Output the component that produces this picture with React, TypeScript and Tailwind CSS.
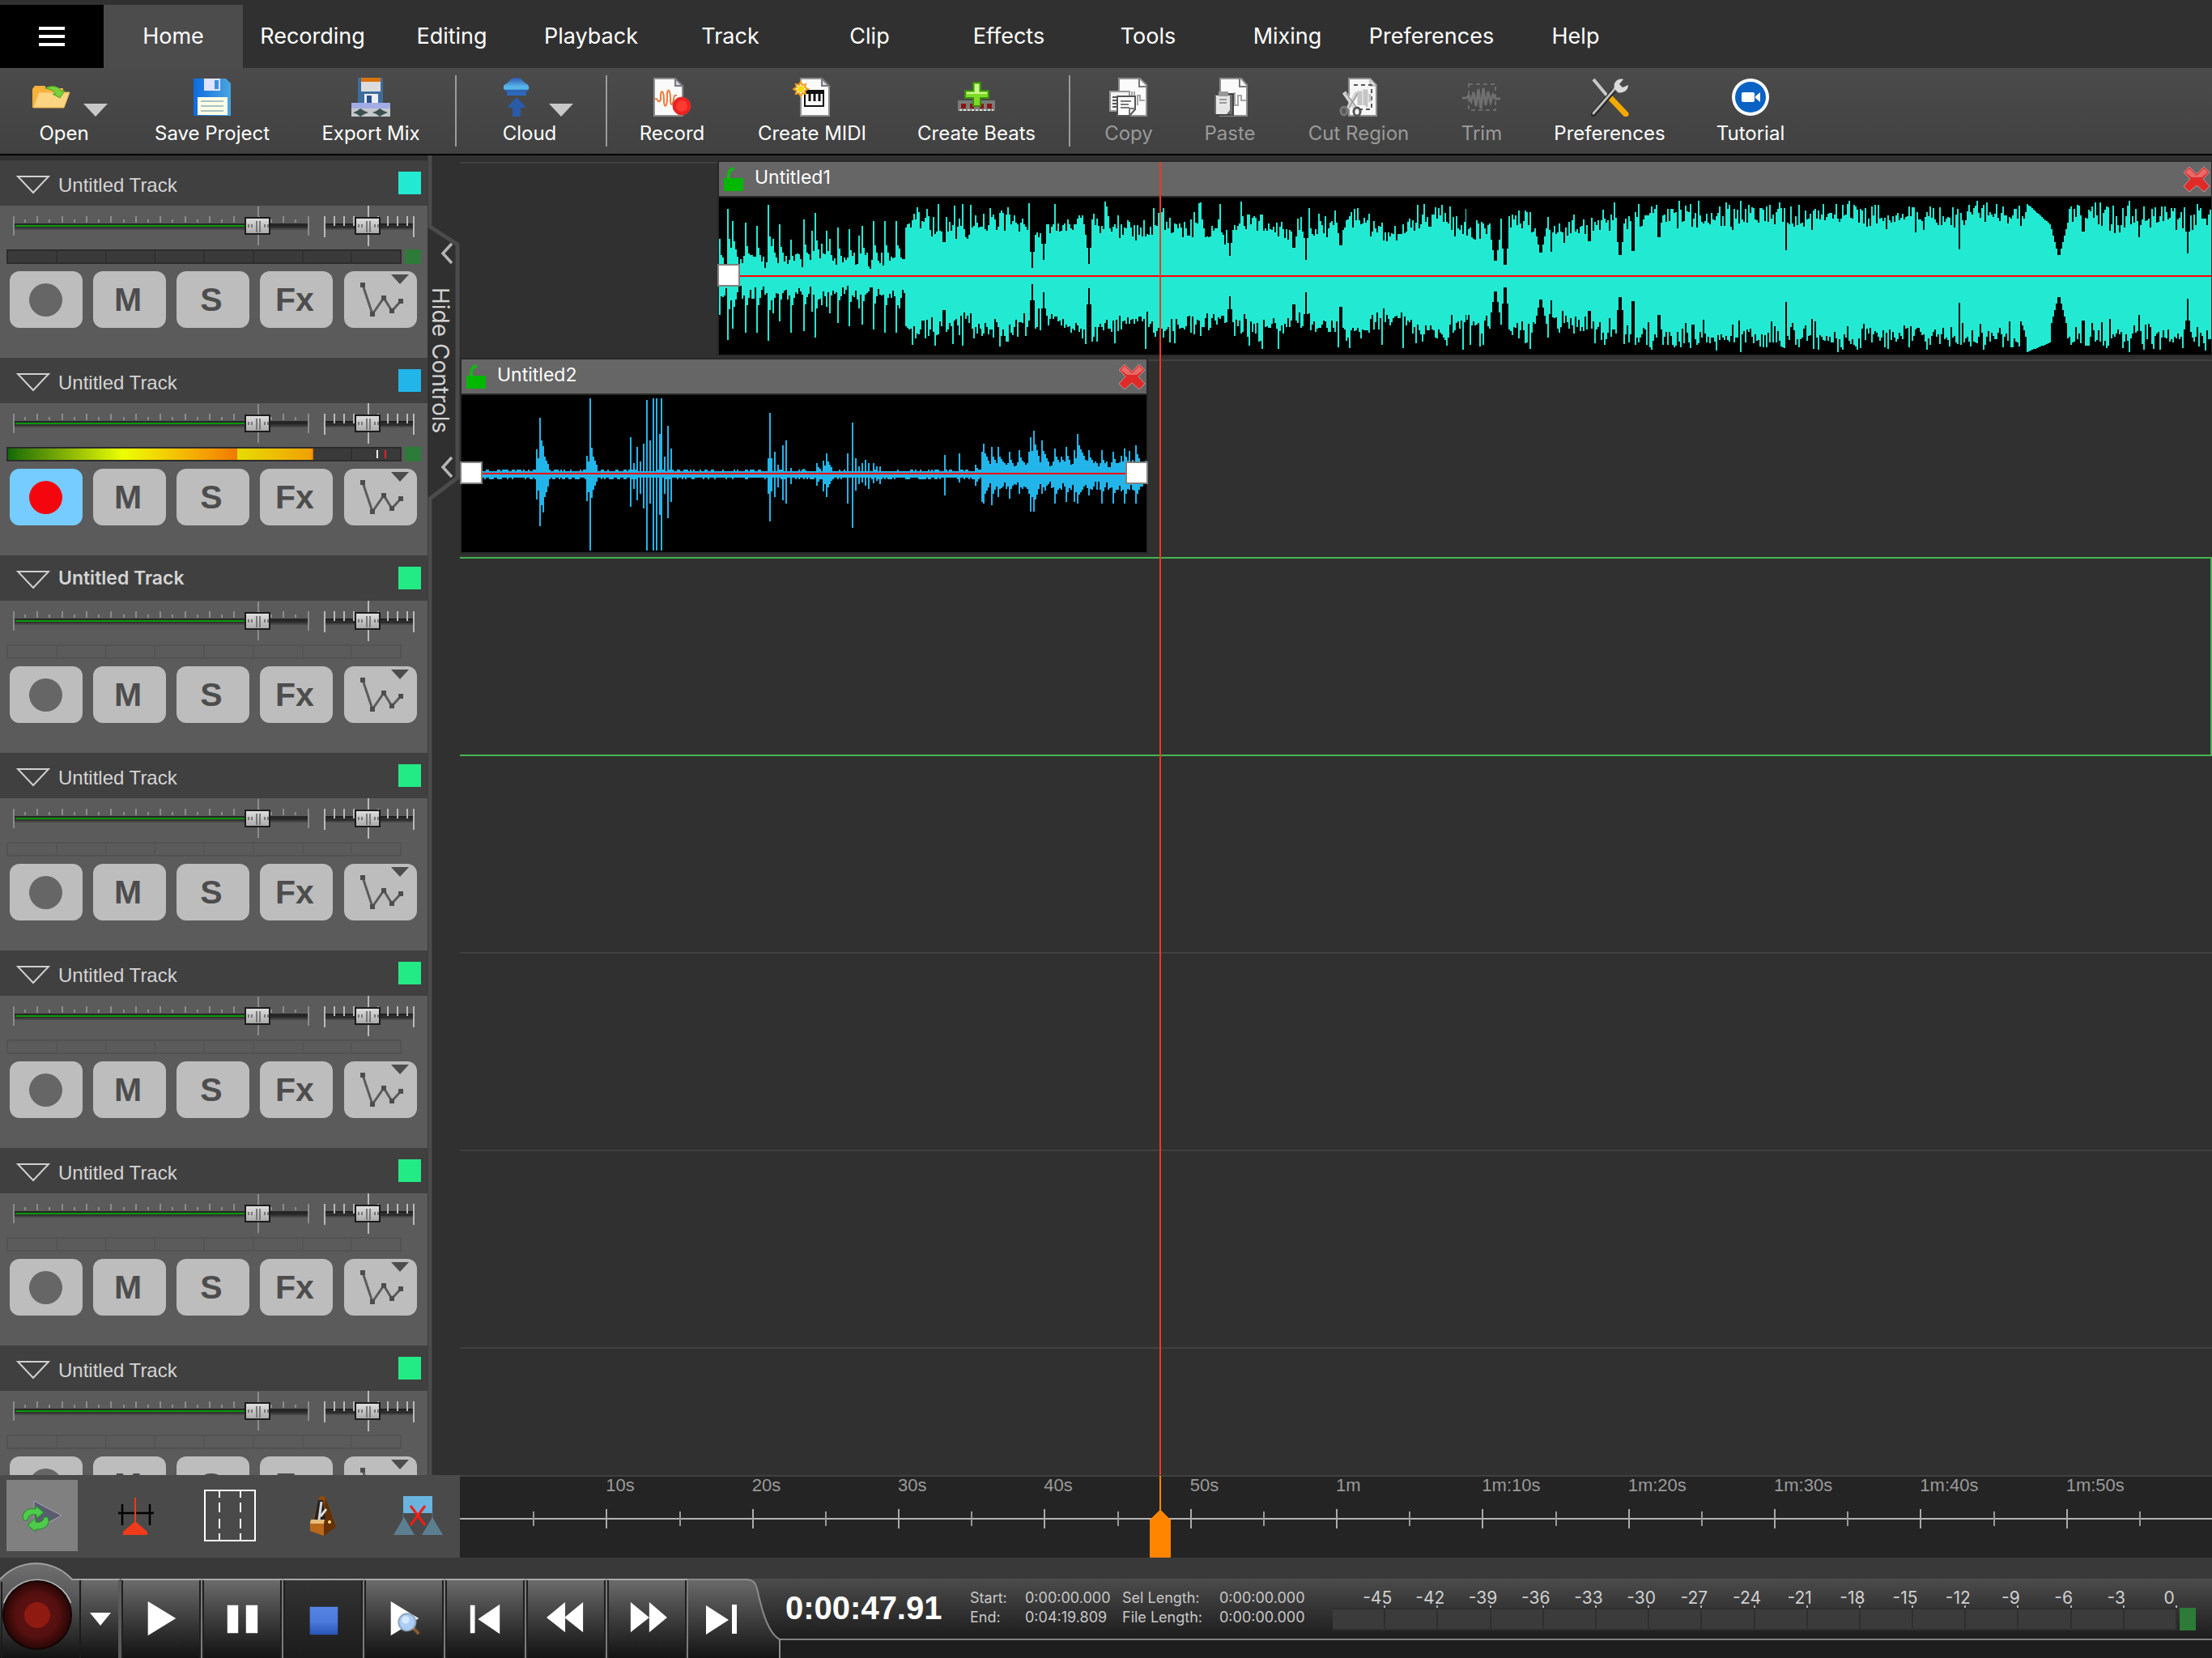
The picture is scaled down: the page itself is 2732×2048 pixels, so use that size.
import React from 'react';
import clsx from 'clsx';

const MENU = ['Home', 'Recording', 'Editing', 'Playback', 'Track', 'Clip', 'Effects', 'Tools', 'Mixing', 'Preferences', 'Help'];

const TRACKS = [
  { color: 'bg-[#22ead2]', state: 'idle' },
  { color: 'bg-[#22b5ea]', state: 'armed' },
  { color: 'bg-[#22ea85]', state: 'selected' },
  { color: 'bg-[#22ea85]', state: 'empty' },
  { color: 'bg-[#22ea85]', state: 'empty' },
  { color: 'bg-[#22ea85]', state: 'empty' },
  { color: 'bg-[#22ea85]', state: 'empty' },
];

const RULER = ['', '10s', '20s', '30s', '40s', '50s', '1m', '1m:10s', '1m:20s', '1m:30s', '1m:40s', '1m:50s'];
const LEVELS = [-45, -42, -39, -36, -33, -30, -27, -24, -21, -18, -15, -12, -9, -6, -3, 0];

const VISIBLE_SECONDS = 120;
const POSITION = 47.91;
const playheadLeft = `${(POSITION / VISIBLE_SECONDS) * 100}%`;

/* ---------- waveforms ---------- */

const MID = 97;

function createRandom(seed: number) {
  let s = seed;
  return () => {
    s = (s * 1664525 + 1013904223) % 4294967296;
    return s / 4294967296;
  };
}

// [x, up, down]
const INTRO_SPIKES = [
  [1, 46, 48], [11, 83, 79], [18, 68, 65], [33, 66, 70], [41, 26, 28], [47, 62, 70], [61, 88, 80], [68, 46, 46], [75, 64, 56],
  [89, 45, 70], [105, 70, 68], [115, 56, 44], [119, 78, 76], [127, 40, 36], [133, 56, 38], [137, 46, 46], [147, 60, 58],
  [161, 58, 62], [173, 50, 40], [177, 62, 60], [191, 68, 66], [205, 68, 70], [219, 68, 70], [223, 34, 40],
];

// [x, amplitude, half width]
const DIPS = [
  [58, 3, 2], [228, 8, 3], [278, 22, 2], [387, 10, 4], [401, 20, 4], [457, 15, 4], [580, 40, 4], [631, 25, 5], [710, 25, 4],
  [725, 20, 3], [768, 25, 3], [840, 32, 2], [960, 12, 6], [972, 4, 4], [1016, 24, 8], [1029, 30, 3], [1076, 30, 3],
  [1114, 18, 5], [1130, 18, 3], [1162, 35, 3], [1319, 32, 2], [1533, 33, 2], [1656, 22, 10], [1686, 42, 3], [1755, 48, 4],
  [1815, 28, 3],
];

function songWave() {
  const rnd = createRandom(11);
  let d = '';
  for (let x = 1; x < 1844; x += 2) {
    let up: number;
    let down: number;
    if (x < 228) {
      up = 9 + rnd() * 20;
      down = 11 + rnd() * 18;
      for (const [sx, u, dn] of INTRO_SPIKES) {
        const dist = x - sx;
        if (dist >= -1 && dist < 1) {
          up = u;
          down = dn;
        } else if (dist >= 1 && dist < 7) {
          up = Math.max(up, u * (0.7 - dist * 0.07));
          down = Math.max(down, dn * (0.66 - dist * 0.07));
        }
      }
    } else {
      const late = x > 1130;
      const base = late ? 50 : 43;
      const range = late ? 43 : 36;
      const swell = late ? 0 : Math.sin(x / 17) * 6;
      const loud = rnd();
      up = base + swell + (loud * 0.5 + Math.pow(rnd(), late ? 0.7 : 1.1) * 0.55) * range;
      down = base + swell + (loud * 0.5 + Math.pow(rnd(), late ? 0.7 : 1.1) * 0.55) * range;
      if (rnd() < 0.07) up = 82 + rnd() * 10;
      if (rnd() < 0.07) down = 82 + rnd() * 10;
      if (x > 1616 && x < 1646) {
        up = 90 - (x - 1616) * 0.9;
        down = 94 - (x - 1616) * 0.4;
      }
    }
    for (const [dx, amp, w] of DIPS) {
      const dist = Math.abs(x - dx);
      if (dist < w) {
        const cap = amp + (dist / w) * 40;
        up = Math.min(up, cap);
        down = Math.min(down, cap);
      }
    }
    d += `M${x} ${MID - Math.round(Math.min(up, 93))}V${MID + Math.round(Math.min(down, 95))}`;
  }
  return d;
}

// [x, up, down, decay]
const SPIKES = [
  [94, 30, 32, 4], [98, 69, 65, 2], [101, 34, 48, 8], [156, 22, 34, 6], [160, 93, 95, 1], [162, 32, 30, 6], [210, 45, 41, 1],
  [214, 13, 19, 1], [218, 33, 33, 1], [222, 15, 25, 1], [226, 37, 43, 1], [230, 91, 95, 1], [234, 41, 37, 1],
  [238, 93, 95, 1], [242, 93, 95, 1], [245, 49, 51, 1], [248, 93, 95, 1], [252, 21, 25, 1], [256, 59, 55, 1],
  [260, 31, 35, 1], [380, 19, 25, 1], [382, 75, 59, 1], [384, 19, 22, 1], [388, 27, 29, 1], [392, 11, 17, 1],
  [398, 35, 33, 1], [402, 41, 37, 1], [407, 7, 13, 2], [424, 6, 7, 3], [440, 13, 15, 4], [448, 16, 22, 2], [451, 25, 29, 7],
  [478, 25, 37, 1], [484, 63, 67, 1], [488, 19, 21, 1], [492, 9, 13, 1], [496, 13, 11, 1], [500, 17, 15, 1],
  [504, 13, 19, 1], [510, 13, 12, 1], [514, 9, 9, 1], [518, 9, 13, 1], [598, 23, 27, 1], [616, 25, 11, 1],
  [636, 11, 15, 5], [644, 27, 35, 3], [646, 37, 37, 9], [655, 33, 39, 10], [663, 33, 29, 12], [677, 27, 31, 8], [690, 29, 25, 8],
  [702, 27, 25, 3], [704, 45, 47, 3], [708, 53, 47, 8], [718, 41, 25, 10], [734, 31, 37, 8], [741, 21, 20, 6], [748, 33, 35, 6],
  [758, 29, 35, 5], [762, 49, 37, 14], [776, 29, 27, 10], [791, 29, 37, 7], [806, 27, 37, 5], [816, 22, 22, 6],
  [820, 31, 37, 6], [825, 28, 20, 4], [834, 35, 37, 8],
];

function voiceWave() {
  const rnd = createRandom(5);
  let d = '';
  for (let x = 1; x < 846; x += 2) {
    const dense = x > 644;
    let up = dense ? 8 + rnd() * 9 : rnd() < 0.35 ? 5 : 3;
    let down = dense ? 9 + rnd() * 12 : rnd() < 0.35 ? 7 : 5;
    for (const [sx, u, dn, decay] of SPIKES) {
      const dist = x - sx;
      if (dist >= -1 && dist < 1) {
        up = Math.max(up, u);
        down = Math.max(down, dn);
      } else if (dist >= 1 && dist < decay) {
        const k = 0.75 * (1 - dist / (decay + 3));
        up = Math.max(up, u * k);
        down = Math.max(down, dn * k);
      }
    }
    d += `M${x} ${MID - Math.round(up)}V${MID + Math.round(down)}`;
  }
  return d;
}

const SONG_PATH = songWave();
const VOICE_PATH = voiceWave();

/* ---------- toolbar icons ---------- */

const Page = ({ x = 9 }: { x?: number }) => (
  <>
    <path d={`M${x} 1h26l9 9v37h-35z`} fill="#fafafa" stroke="#8d8d8d" strokeWidth="2" />
    <path d={`M${x + 26} 1v9h9z`} fill="#d8d8de" stroke="#77777f" strokeWidth="2" />
  </>
);

const OpenIcon = () => (
  <svg viewBox="0 0 48 48" className="size-12">
    <path d="M1 14l3-4h12l3 3h20v8L8 37H1z" fill="#f7b23c" />
    <path d="M9 18h38l-7 19H2z" fill="#fdd582" stroke="#f3b44c" />
    <path d="M17 13c7-4 16-3 19 3h5l-6 9-9-5h4c-2-4-7-6-13-7z" fill="#7ad03a" stroke="#4b9d1c" />
  </svg>
);

const SaveIcon = () => (
  <svg viewBox="0 0 48 48" className="size-12">
    <defs>
      <linearGradient id="save" x1="0" y1="0" x2="1" y2="0">
        <stop offset="0" stopColor="#0d6be0" />
        <stop offset="1" stopColor="#4aa5e0" />
      </linearGradient>
    </defs>
    <path d="M1 1h40l6 6v40H1z" fill="url(#save)" />
    <path d="M14 1h20v15H14z" fill="#dfe3fb" />
    <path d="M27 3h5v11h-5z" fill="#3c8fe0" />
    <path d="M6 24h37v22H6z" fill="#fdfde6" />
    <path d="M10 29h28M10 35h28M10 41h28" stroke="#a9c4c6" strokeWidth="2" />
  </svg>
);

const ExportIcon = () => (
  <svg viewBox="0 0 48 48" className="size-12">
    <path d="M8 0h31v34H8z" fill="#3f6c9c" />
    <path d="M12 0h24v5H12z" fill="#d9730d" />
    <path d="M12 5h24v12H12z" fill="#dcdcdc" />
    <path d="M16 20h17v14H16z" fill="#eaf0f7" />
    <path d="M19 22h6v11h-6z" fill="#2d4f8e" />
    <path d="M0 31h48v8H0z" fill="#a3ace4" />
    <path d="M0 38h48v10H0z" fill="#c4c8ca" />
    <path d="M2 43l5-2 4-3 5 3 5 2-5 2-5 3-4-3zM26 43l5-2 4-3 5 3 5 2-5 2-5 3-4-3z" fill="#3d4f50" />
  </svg>
);

const CloudIcon = () => (
  <svg viewBox="0 0 48 48" className="size-12">
    <defs>
      <linearGradient id="cloud" x1="0" y1="0" x2="0" y2="1">
        <stop offset="0" stopColor="#2e55ac" />
        <stop offset="0.5" stopColor="#57b4e8" />
        <stop offset="0.65" stopColor="#57b4e8" />
        <stop offset="0.7" stopColor="#2e62b4" />
        <stop offset="1" stopColor="#2a6cc0" />
      </linearGradient>
    </defs>
    <path d="M17 2c3-3 10-3 13 0l5 5c5 1 6 8 1 10v5H12v-5c-6-2-5-9 0-10z" fill="url(#cloud)" />
    <path d="M24 24l12 13h-7v11H19V37h-7z" fill="#2a5ba8" />
  </svg>
);

const RecordIcon = () => (
  <svg viewBox="0 0 48 48" className="size-12">
    <Page x={2} />
    <path d="M3 27c3-4 4 7 7 0V20c2-7 4 0 4 8s3 10 4 0V18c2-6 4 0 4 9s3 7 4 0 2-5 4-5" fill="none" stroke="#ee7b3a" strokeWidth="2" />
    <circle cx="36" cy="35" r="11" fill="#e22" stroke="#c33" />
    <circle cx="36" cy="35" r="7" fill="#ff3a30" />
  </svg>
);

const MidiIcon = () => (
  <svg viewBox="0 0 48 48" className="size-12">
    <Page x={10} />
    <path d="M15 17h23v18H15z" fill="#fff" stroke="#111" strokeWidth="2" />
    <path d="M14 15h25v5H14z" fill="#111" />
    <path d="M21 20v9M27 20v9M33 20v9" stroke="#111" strokeWidth="3" />
    <path d="M10 5l2 4 4-1-1 4 4 2-4 2 1 4-4-1-2 4-2-4-4 1 1-4-4-2 4-2-1-4 4 1z" fill="#fff" stroke="#f2a01d" strokeWidth="2" />
    <circle cx="10" cy="14" r="4" fill="#ffd800" />
  </svg>
);

const BeatsIcon = () => (
  <svg viewBox="0 0 48 48" className="size-12">
    <path d="M1 28h46v13H1z" fill="#777d76" />
    <path d="M5 32h6v6H5zM16 32h5v6h-5zM28 32h5v6h-5zM37 32h6v6h-6z" fill="#8d1414" />
    <path d="M3 40h42" stroke="#ddd" strokeWidth="2" strokeDasharray="3 2" />
    <path d="M20 6h9v10h10v9H29v10h-9V25H10v-9h10z" fill="#7ddb25" stroke="#3c8c14" strokeWidth="2" />
    <path d="M22 8h5v10h10v2H12v-2h10z" fill="#cdf58f" />
  </svg>
);

const CopyIcon = () => (
  <svg viewBox="0 0 48 48" className="size-12">
    <path d="M12 1h26l8 8v38H12z" fill="#fafafa" stroke="#8d8d8d" strokeWidth="2" />
    <path d="M37 1v10h9" fill="none" stroke="#777" strokeWidth="2" />
    <path d="M28 17v8M31 17v14M35 34V22h3v6h6" fill="none" stroke="#a5a5a5" strokeWidth="2" />
    <path d="M1 17h24v24H1z" fill="#f2f2f2" stroke="#999" strokeWidth="2" />
    <path d="M4 24h7M4 28h6M4 32h6M4 36h6" stroke="#555" strokeWidth="2" />
    <path d="M10 23h22v16l-7 8H10z" fill="#fff" stroke="#555" strokeWidth="2" />
    <path d="M14 29h13M14 33h10M14 37h11M25 46v-8h7" fill="none" stroke="#777" strokeWidth="2" />
  </svg>
);

const PasteIcon = () => (
  <svg viewBox="0 0 48 48" className="size-12">
    <path d="M12 1h26l7 8v38H12z" fill="#fafafa" stroke="#8d8d8d" strokeWidth="2" />
    <path d="M36 1v10h8" fill="none" stroke="#777" strokeWidth="2" />
    <path d="M30 18v16h4V22h4v6h6" fill="none" stroke="#a5a5a5" strokeWidth="2" />
    <path d="M4 20h24v26H4z" fill="#6b6b6b" stroke="#444" strokeWidth="2" />
    <path d="M7 22h17v18l-4 5H7z" fill="#e6e6e6" />
    <path d="M10 17h12v6H10z" fill="#999" />
    <path d="M11 27h9M11 31h9" stroke="#999" strokeWidth="2" />
  </svg>
);

const CutIcon = () => (
  <svg viewBox="0 0 48 48" className="size-12">
    <path d="M12 1h26l8 8v38H12z" fill="#f6f6f6" stroke="#8d8d8d" strokeWidth="2" />
    <path d="M38 1v9h8" fill="#ddd" stroke="#999" />
    <path d="M18 9h22v30H22" fill="none" stroke="#555" strokeWidth="2" strokeDasharray="5 4" />
    <path d="M24 34V18h3v16M31 34V16h3v20M38 30V20" fill="none" stroke="#c4c4c4" strokeWidth="3" />
    <path d="M6 18l14 20M22 18L11 38" stroke="#d4d4d4" strokeWidth="5" />
    <path d="M8 19l14 18M23 19L12 37" stroke="#777" strokeWidth="1" />
    <ellipse cx="6" cy="41" rx="4" ry="5" fill="#555" stroke="#777" strokeWidth="3" />
    <ellipse cx="22" cy="42" rx="4" ry="5" fill="none" stroke="#555" strokeWidth="3" />
  </svg>
);

const TrimIcon = () => (
  <svg viewBox="0 0 48 48" className="size-12">
    <path d="M8 8h33v32H8z" fill="none" stroke="#6c6c6c" strokeWidth="2" strokeDasharray="5 4" />
    <path d="M0 25h5l3-3 3 7 3-11 3 17 3-21 3 24 3-25 3 21 3-17 3 13 3-9 3 5h6" fill="none" stroke="#6f6f6f" strokeWidth="3" />
  </svg>
);

const ToolsIcon = () => (
  <svg viewBox="0 0 48 48" className="size-12">
    <path d="M4 2l20 24" stroke="#c9c9c9" strokeWidth="4" />
    <path d="M26 26l18 19" stroke="#f3a900" strokeWidth="7" strokeLinecap="round" />
    <path d="M4 45l24-28" stroke="#222" strokeWidth="6" strokeLinecap="round" />
    <path d="M4 44l27-31" stroke="#bdbdbd" strokeWidth="3" strokeLinecap="round" />
    <path d="M41 2c-7-2-13 4-11 11l4 5c6 2 13-2 13-9l-7 3-4-4z" fill="#d9d9d9" />
  </svg>
);

const TutorialIcon = () => (
  <svg viewBox="0 0 48 48" className="size-12">
    <circle cx="24" cy="24" r="23" fill="#fff" />
    <circle cx="24" cy="24" r="19" fill="#0a62c4" />
    <rect x="13" y="18" width="16" height="12" rx="2" fill="#fff" />
    <path d="M30 23l6-5v12l-6-5z" fill="#fff" />
  </svg>
);

type Tool = { label: string; width: string; icon: React.FC; menu?: boolean; disabled?: boolean };

const TOOL_GROUPS: { divider: string; tools: Tool[] }[] = [
  {
    divider: 'mx-3',
    tools: [
      { label: 'Open', width: 'w-[158px]', icon: OpenIcon, menu: true },
      { label: 'Save Project', width: 'w-[208px]', icon: SaveIcon },
      { label: 'Export Mix', width: 'w-[184px]', icon: ExportIcon },
    ],
  },
  { divider: 'mx-4', tools: [{ label: 'Cloud', width: 'w-[156px]', icon: CloudIcon, menu: true }] },
  {
    divider: 'mx-5',
    tools: [
      { label: 'Record', width: 'w-[128px]', icon: RecordIcon },
      { label: 'Create MIDI', width: 'w-[218px]', icon: MidiIcon },
      { label: 'Create Beats', width: 'w-[188px]', icon: BeatsIcon },
    ],
  },
  {
    divider: '',
    tools: [
      { label: 'Copy', width: 'w-[104px]', icon: CopyIcon, disabled: true },
      { label: 'Paste', width: 'w-[146px]', icon: PasteIcon, disabled: true },
      { label: 'Cut Region', width: 'w-[172px]', icon: CutIcon, disabled: true },
      { label: 'Trim', width: 'w-[132px]', icon: TrimIcon, disabled: true },
      { label: 'Preferences', width: 'w-[184px]', icon: ToolsIcon },
      { label: 'Tutorial', width: 'w-[164px]', icon: TutorialIcon },
    ],
  },
];

const MenuBar = () => (
  <nav className="flex h-[84px] bg-[#303030] pt-1.5 text-[27px] text-white">
    <button aria-label="Main menu" className="flex w-32 flex-col items-center justify-center gap-1.5 bg-black">
      <span className="h-1 w-8 bg-white" />
      <span className="h-1 w-8 bg-white" />
      <span className="h-1 w-8 bg-white" />
    </button>
    {MENU.map((item) => (
      <button
        key={item}
        className={clsx(
          item === 'Preferences' ? 'w-[184px]' : 'w-[172px]',
          item === 'Home' && 'bg-[#4c4c4c]'
        )}
      >
        {item}
      </button>
    ))}
  </nav>
);

const Toolbar = () => (
  <div className="flex h-[108px] border-b-2 border-black bg-linear-to-b from-[#4b4b4b] to-[#414141]">
    {TOOL_GROUPS.map(({ divider, tools }) => (
      <React.Fragment key={tools[0].label}>
        {tools.map(({ label, width, icon: Icon, menu, disabled }) => (
          <button
            key={label}
            disabled={disabled}
            className={clsx('flex flex-col items-center pt-3', width, disabled ? 'text-[#9a9a9a]' : 'text-white')}
          >
            <span className={clsx('flex items-end', menu && 'gap-4 pl-3.5')}>
              <Icon />
              {menu && (
                <svg viewBox="0 0 30 16" className="h-4 w-[30px]">
                  <path d="M0 0h30L15 16z" fill="#c8c8c8" />
                </svg>
              )}
            </span>
            <span className="mt-1.5 text-[24px] leading-[30px] whitespace-nowrap">{label}</span>
          </button>
        ))}
        {divider && <span className={clsx('mt-[9px] h-[88px] w-0.5 bg-[#9b9b9b]', divider)} />}
      </React.Fragment>
    ))}
  </div>
);

/* ---------- track controls ---------- */

const SliderThumb = ({ x }: { x: number }) => (
  <g>
    <rect x={x + 1} y="15" width="30" height="20" fill="url(#thumb)" stroke="#1c1c1c" strokeWidth="2" />
    <path d={`M${x + 15} 19v14M${x + 19} 19v14M${x + 5} 23v4M${x + 9} 23v4M${x + 25} 23v4M${x + 29} 23v4`} stroke="#777" strokeWidth="2" />
  </g>
);

const VolumeSlider = () => (
  <label className="relative block h-[50px] w-[384px]">
    <svg viewBox="0 0 384 50" className="h-full w-full" shapeRendering="crispEdges">
      <defs>
        <linearGradient id="thumb" x1="0" y1="0" x2="0" y2="1">
          <stop offset="0" stopColor="#e0e0e0" />
          <stop offset="1" stopColor="#a8a8a8" />
        </linearGradient>
      </defs>
      {Array.from({ length: 23 }, (_, i) => (
        <path key={i} d={`M${31 + Math.round(i * 15.2)} ${i % 2 ? 13 : 17}V21`} stroke="#8b8b8b" strokeWidth="2" />
      ))}
      <path d="M17 13v24M381 13v24M319 1v48" stroke="#8b8b8b" strokeWidth="2" />
      <path d="M18 23h362" stroke="#262626" strokeWidth="2" />
      <path d="M18 25h362" stroke="#262626" strokeWidth="2" />
      <path d="M18 27h362" stroke="#333" strokeWidth="2" />
      <path d="M18 29h362" stroke="#484848" strokeWidth="2" />
      <path d="M19 25h284" stroke="#0a960a" strokeWidth="2" />
      <SliderThumb x={302} />
    </svg>
    <input type="range" aria-label="Volume" defaultValue={83} className="absolute inset-0 h-full w-full opacity-0" />
  </label>
);

const PanSlider = () => (
  <label className="relative block h-[50px] w-36">
    <svg viewBox="384 0 144 50" className="h-full w-full" shapeRendering="crispEdges">
      <path d="M401 13v26M511 13v26M455 0v50" stroke="#b9b9b9" strokeWidth="2" />
      <path d="M402 23h108" stroke="#1f1f1f" strokeWidth="2" />
      <path d="M402 26h108" stroke="#2d2d2d" strokeWidth="4" />
      <path d="M402 29h108" stroke="#484848" strokeWidth="2" />
      <path d="M413 13v12M425 13v12M437 13v12M467 13v12M479 13v12M491 13v12M503 13v12" stroke="#b9b9b9" strokeWidth="2" />
      <SliderThumb x={438} />
    </svg>
    <input type="range" aria-label="Pan" defaultValue={50} className="absolute inset-0 h-full w-full opacity-0" />
  </label>
);

const Meter = ({ state }: { state: string }) => {
  const active = state === 'idle' || state === 'armed';
  return (
    <div className="mt-1 flex gap-1 pl-2">
      <div
        className={clsx(
          'relative flex h-[18px] w-[488px] border-2',
          active ? 'border-[#2c2c2c] bg-[#3a3a3a]' : 'border-[#535353]'
        )}
      >
        {Array.from({ length: 8 }, (_, i) => (
          <span key={i} className={clsx('flex-1', i > 0 && 'border-l-2', active ? 'border-[#303030]' : 'border-[#555]')} />
        ))}
        {state === 'armed' && (
          <div className="absolute inset-y-0 left-0 flex w-full">
            <span className="w-[283px] bg-linear-to-r from-[#0b6a05] via-[#ecff00] to-[#f07800]" />
            <span className="w-[94px] border-r-2 border-[#f07800] bg-linear-to-r from-[#e6dc00] to-[#f0a000]" />
            <span className="mt-0.5 ml-[78px] h-2.5 w-0.5 bg-white" />
            <span className="mt-0.5 ml-2 h-2.5 w-0.5 bg-[#e82030]" />
          </div>
        )}
      </div>
      {active && <span className="h-[18px] w-5 bg-[#2c7b38]" />}
    </div>
  );
};

const keyClass = 'flex h-[70px] w-[90px] items-center justify-center rounded-xl bg-[#bdbdbd] pr-1';

const TrackControls = ({ color, state }: { color: string; state: string }) => (
  <section className="h-[244px] shrink-0 bg-[#5b5b5b]">
    <header className="flex h-14 items-center bg-[#404040] pr-2 pl-5 text-[#d4d4d4]">
      <button aria-label="Collapse track">
        <svg viewBox="0 0 42 24" className="mt-1 h-6 w-[42px]">
          <path d="M2 2h38L21 22z" fill="none" stroke="#d0d0d0" strokeWidth="2" />
        </svg>
      </button>
      <h2
        className={clsx(
          'ml-2.5 flex-1',
          state === 'selected'
            ? 'text-[23px] font-semibold'
            : "pt-1.5 font-['Liberation_Sans',Arial,sans-serif] text-[24px]"
        )}
      >
        Untitled Track
      </h2>
      <span className={clsx('size-7', color)} />
    </header>
    <div className="flex">
      <VolumeSlider />
      <PanSlider />
    </div>
    <Meter state={state} />
    <div className="mt-[9px] flex gap-[13px] pl-3 font-['Liberation_Sans',Arial,sans-serif] text-[41px] leading-none font-bold text-[#4d4d4d]">
      <button
        aria-label="Arm for recording"
        className={clsx(
          'flex h-[70px] w-[90px] items-center justify-center rounded-xl pr-0.5',
          state === 'armed' ? 'bg-[#76ccff]' : 'bg-[#bdbdbd]'
        )}
      >
        <span className={clsx('size-[41px] rounded-full', state === 'armed' ? 'bg-[#f5060e]' : 'bg-[#666]')} />
      </button>
      <button className={keyClass}>M</button>
      <button className={keyClass}>S</button>
      <button className={keyClass}>Fx</button>
      <button aria-label="Automation" className="ml-px rounded-xl bg-[#bdbdbd]">
        <svg viewBox="0 0 90 70" className="h-[70px] w-[90px]">
          <path d="M23 17l12 36 14-20 10 16 11-12" fill="none" stroke="#5c5c5c" strokeWidth="3" />
          <path d="M20 14h6v6h-6zM32 50h6v6h-6zM46 30h6v6h-6zM56 46h6v6h-6zM67 34h6v6h-6zM58 4h22L69 16z" fill="#4d4d4d" />
        </svg>
      </button>
    </div>
  </section>
);

const Chevron = () => (
  <svg viewBox="0 0 16 28" className="h-7 w-4 self-end">
    <path d="M14 2L3 14l11 12" fill="none" stroke="#b5b5b5" strokeWidth="3.5" />
  </svg>
);

const HideControls = () => (
  <div className="relative w-10 overflow-hidden">
    <svg className="absolute inset-0 h-full w-full">
      <path d="M3 -4V88L37 110V398L3 424V4000" fill="none" stroke="#4b4b4b" strokeWidth="5" />
    </svg>
    <button className="relative mt-[107px] flex h-[292px] w-8 flex-col items-center justify-between text-[28px] leading-8 text-[#d2d2d2]">
      <Chevron />
      <span className="[writing-mode:vertical-rl]">Hide Controls</span>
      <Chevron />
    </button>
  </div>
);

/* ---------- timeline ---------- */

type ClipProps = { title: string; path: string; width: number; stroke: string; className: string; tail?: boolean };

const Clip = ({ title, path, width, stroke, className, tail }: ClipProps) => (
  <article className={clsx('relative -mt-0.5 h-[238px] bg-[#282828] outline-2 outline-[#282828]', className)}>
    <header className="flex h-[42px] items-center bg-[#666] pl-1.5 text-[23px] text-white">
      <svg viewBox="0 0 24 32" className="h-8 w-6">
        <path d="M0 15h24v16H0z" fill="#00b800" />
        <path d="M6 16c-1-9 2-12 7-13" fill="none" stroke="#12b812" strokeWidth="4" />
      </svg>
      <h3 className="ml-3.5 flex-1 pb-1">{title}</h3>
      <button aria-label={`Remove ${title}`}>
        <svg viewBox="0 0 36 36" className="size-9">
          <path d="M9 3l9 9 9-9 7 7-8 8 8 9-7 7-9-8-9 8-7-7 8-9-8-8z" fill="#e02a28" stroke="#b99" />
          <path d="M9 5l9 9 9-9 5 5-8 6H12l-8-6z" fill="#e76a68" />
        </svg>
      </button>
    </header>
    <div className="mt-0.5 h-[194px] bg-black">
      <svg viewBox={`0 0 ${width} 194`} preserveAspectRatio="none" className="h-full w-full" shapeRendering="crispEdges">
        <path d={path} stroke={stroke} strokeWidth="2" fill="none" />
        <path d={`M0 97H${width}`} stroke="#f00" strokeWidth="2" />
      </svg>
    </div>
    <span className="absolute top-[126px] -left-0.5 size-7 border-2 border-[#808080] bg-white" />
    {tail && <span className="absolute top-[126px] -right-0.5 size-7 border-2 border-[#808080] bg-white" />}
  </article>
);

const Timeline = () => (
  <main className="relative min-w-0 flex-1 overflow-hidden pt-2">
    {TRACKS.map(({ state }, i) => (
      <div
        key={i}
        className={clsx(
          'flex h-[244px] border-t-2',
          state === 'selected' && 'border-r-2',
          i === 2 || i === 3 ? 'border-[#43b54f]' : 'border-[#404040]'
        )}
      >
        {i === 0 && <Clip title="Untitled1" path={SONG_PATH} width={1844} stroke="#22ead2" className="mr-px ml-80 flex-1" />}
        {i === 1 && <Clip title="Untitled2" path={VOICE_PATH} width={846} stroke="#22b5ea" className="ml-0.5 w-[846px]" tail />}
      </div>
    ))}
    <span className="absolute top-2 bottom-0 w-0.5 bg-[#ee3a20]" style={{ left: playheadLeft }} />
  </main>
);

const Ruler = () => (
  <div className="relative flex-1 border-t-2 border-[#404040] bg-[#242424] font-['Liberation_Sans',Arial,sans-serif] text-[22px] leading-[22px] text-[#9a9a9a]">
    <div className="grid h-full grid-cols-12">
      {RULER.map((label) => (
        <div key={label}>
          <div className="h-10">{label}</div>
          <div className="flex h-6 items-center">
            <span className={clsx('w-0.5 bg-[#aaa]', label ? 'h-6' : 'h-0.5')} />
            <span className="h-0.5 flex-1 bg-[#b4b4b4]" />
            <span className="h-[18px] w-0.5 bg-[#999]" />
            <span className="h-0.5 flex-1 bg-[#b4b4b4]" />
          </div>
        </div>
      ))}
    </div>
    <svg viewBox="0 0 26 102" className="absolute -top-0.5 -ml-3 h-[102px] w-[26px]" style={{ left: playheadLeft }} shapeRendering="crispEdges">
      <path d="M12 1h2v43h-2z" fill="#ff8400" />
      <path d="M13 43l13 12v47H0V55z" fill="#ff8400" />
    </svg>
  </div>
);

const ModeButtons = () => (
  <div className="flex w-[568px] items-center gap-7 bg-[#4a4a4a] pb-0.5 pl-2">
    <button aria-label="Loop playback" className="bg-[#808080]">
      <svg viewBox="0 0 88 88" className="size-[88px]">
        <path d="M34 26l34 18-34 18z" fill="#5a5d70" stroke="#a5a5ad" />
        <path d="M21 50c-3-9 4-16 15-14v-4l10 8-9 8v-5c-6-1-11 1-11 7z" fill="#4ecb4a" stroke="#1f8a22" />
        <path d="M51 46c4 9-4 16-15 15v3l-10-8 10-9v5c6 1 10-1 10-6z" fill="#4ecb4a" stroke="#1f8a22" />
      </svg>
    </button>
    <button aria-label="Bookmarks">
      <svg viewBox="0 0 88 88" className="size-[88px]">
        <path d="M27 30v26M61 30v26M22 41h44" stroke="#000" strokeWidth="2.5" />
        <path d="M43 22v32" stroke="#f03a1c" strokeWidth="2" />
        <path d="M43 51l15 13v4H28v-4z" fill="#f03a1c" />
      </svg>
    </button>
    <button aria-label="Snap to grid">
      <svg viewBox="0 0 88 88" className="size-[88px]">
        <path d="M13 13h62v62H13z" fill="none" stroke="#fff" strokeWidth="2" />
        <path d="M31 14v8M31 28v12M31 48v12M31 66v8M57 14v8M57 28v12M57 48v12M57 66v8" stroke="#fff" strokeWidth="2" />
      </svg>
    </button>
    <button aria-label="Metronome">
      <svg viewBox="0 0 88 88" className="size-[88px]">
        <path d="M38 22c3-3 6-3 8 0l13 36-15 11-17-6 5-20z" fill="#8a4a10" />
        <path d="M46 22l13 36-15 11V40z" fill="#643004" />
        <path d="M37 25h6l3 25H32z" fill="#222" />
        <path d="M41 27l-3 22M47 36l-7 9" stroke="#d8d8d8" strokeWidth="3" />
        <path d="M27 51h17v18l-17-6z" fill="#b9691c" />
        <path d="M28 49h17l-1 5H27z" fill="#e8bd7c" />
        <circle cx="51" cy="52" r="2" fill="#ffe28a" />
      </svg>
    </button>
    <button aria-label="Crossfade off">
      <svg viewBox="0 0 88 88" className="size-[88px]">
        <path d="M26 20h36v21H26z" fill="#6ab4e0" />
        <path d="M26 40v12M62 40v12" stroke="#52758a" />
        <path d="M27 46l13 22H14zM62 46l13 22H49z" fill="#5c7f90" />
        <path d="M35 32l18 24M53 32L35 56" stroke="#f51c14" strokeWidth="3" />
      </svg>
    </button>
  </div>
);

/* ---------- transport ---------- */

const TRANSPORT: { label: string; icon: React.ReactNode }[] = [
  { label: 'Play', icon: <path d="M32 27v44l36-22z" fill="#fff" /> },
  { label: 'Pause', icon: <path d="M30 32h14v36H30zM54 32h15v36H54z" fill="#fff" /> },
  { label: 'Stop', icon: <path d="M32 34h36v36H32z" fill="url(#stop)" /> },
  {
    label: 'Scrub',
    icon: (
      <>
        <path d="M32 27v44l36-22z" fill="#fff" />
        <path d="M60 60l8 9" stroke="#8d5a2a" strokeWidth="4" />
        <circle cx="53" cy="54" r="11" fill="#a9cdf6" stroke="#8fa5bb" strokeWidth="2" />
        <circle cx="51" cy="51" r="5" fill="#d5e8fd" />
      </>
    ),
  },
  { label: 'Go to start', icon: <path d="M30 32h6v36h-6zM68 31v38L40 50z" fill="#fff" /> },
  { label: 'Rewind', icon: <path d="M48 28v39L24 48zM71 28v39L47 48z" fill="#fff" /> },
  { label: 'Fast forward', icon: <path d="M28 28v39l24-19zM52 28v39l23-19z" fill="#fff" /> },
];

const Transport = () => (
  <div className="flex items-end">
    <button aria-label="Record">
      <svg viewBox="0 0 102 124" className="h-[124px] w-[102px]">
        <defs>
          <linearGradient id="shell" x1="0" y1="0" x2="0" y2="1">
            <stop offset="0" stopColor="#6e6e6e" />
            <stop offset="0.3" stopColor="#5c5c5c" />
            <stop offset="1" stopColor="#131313" />
          </linearGradient>
          <radialGradient id="rec">
            <stop offset="0" stopColor="#661212" />
            <stop offset="0.65" stopColor="#551010" />
            <stop offset="1" stopColor="#2b0606" />
          </radialGradient>
          <linearGradient id="stop" x1="0" y1="0" x2="0" y2="1">
            <stop offset="0" stopColor="#5684e4" />
            <stop offset="0.55" stopColor="#4a79dc" />
            <stop offset="1" stopColor="#2854b4" />
          </linearGradient>
        </defs>
        <path d="M0 27A60 60 0 0 1 89 27H102V124H0z" fill="url(#shell)" />
        <path d="M0 27A60 60 0 0 1 89 27H102" fill="none" stroke="#a2a2a2" strokeWidth="2" />
        <path d="M2 30v94M99 28v96" stroke="#1c1c1c" strokeWidth="2" />
        <path d="M5 56a44 44 0 0 1 82 0" fill="none" stroke="#b0b0b0" strokeWidth="3" />
        <circle cx="46" cy="71" r="43" fill="#140404" />
        <circle cx="46" cy="71" r="41" fill="url(#rec)" />
        <circle cx="46" cy="71" r="16" fill="#8e1a11" />
      </svg>
    </button>
    <button
      aria-label="Record options"
      className="flex h-[98px] w-12 justify-center border-t-2 border-r-4 border-t-[#a8a8a8] border-r-[#5a5a5a] bg-linear-to-b from-[#6b6b6b] to-[#141414] pt-10"
    >
      <svg viewBox="0 0 26 16" className="h-4 w-[26px]">
        <path d="M0 0h26L13 16z" fill="#fff" />
      </svg>
    </button>
    {TRANSPORT.map(({ label, icon }) => (
      <button
        key={label}
        aria-label={label}
        className={clsx(
          'h-[98px] w-[100px] border-t-2 border-r-2 border-t-[#a8a8a8] border-r-[#7a7a7a] bg-linear-to-b',
          label === 'Stop' ? 'from-[#333] to-[#1c1c1c]' : 'from-[#6b6b6b] to-[#141414]'
        )}
      >
        <svg viewBox="0 2 98 96" className="h-24 w-[98px] border-x-2 border-[#1f1f1f]">
          {icon}
        </svg>
      </button>
    ))}
    <button aria-label="Go to end">
      <svg viewBox="0 0 116 98" className="h-[98px] w-[116px]">
        <defs>
          <linearGradient id="key" x1="0" y1="0" x2="0" y2="1">
            <stop offset="0" stopColor="#6b6b6b" />
            <stop offset="1" stopColor="#141414" />
          </linearGradient>
          <linearGradient id="deck" x1="0" y1="0" x2="0" y2="1">
            <stop offset="0" stopColor="#4c4c4c" />
            <stop offset="1" stopColor="#1d1d1d" />
          </linearGradient>
        </defs>
        <path d="M0 0h116v74H0z" fill="url(#deck)" />
        <path d="M100 74h16v24h-16z" fill="#1e1e1e" />
        <path d="M0 0H72C86 1 84 10 89 28 95 52 103 70 113 75V98H0z" fill="url(#key)" />
        <path d="M0 1H72C86 2 84 11 89 29 95 53 103 70 113 75V98M113 75h3" fill="none" stroke="#8a8a8a" strokeWidth="2" />
        <path d="M22 33v36l28-18zM54 32h6v36h-6z" fill="#fff" />
      </svg>
    </button>
  </div>
);

const Footer = () => (
  <footer className="flex h-[124px] bg-[#393939]">
    <Transport />
    <div className="mt-[26px] min-w-0 flex-1 bg-[#1e1e1e]">
      <div className="flex h-[76px] border-b-2 border-[#808080] bg-linear-to-b from-[#4c4c4c] to-[#1d1d1d]">
        <output className="w-[228px] pt-4 pl-1 font-['Liberation_Sans',Arial,sans-serif] text-[40px] leading-10 font-bold text-white">
          0:00:47.91
        </output>
        <dl className="grid grid-cols-[68px_120px_120px_140px] content-start pt-3 pl-1 text-[18px] leading-6 text-[#c8c8c8]">
          <dt>Start:</dt>
          <dd>0:00:00.000</dd>
          <dt>Sel Length:</dt>
          <dd>0:00:00.000</dd>
          <dt>End:</dt>
          <dd>0:04:19.809</dd>
          <dt>File Length:</dt>
          <dd>0:00:00.000</dd>
        </dl>
        <div className="flex flex-1">
          {LEVELS.map((level) => (
            <div key={level} className="flex flex-1 flex-col items-end">
              <span className="-mr-3.5 h-[33px] w-12 pt-3 text-center text-[21px] leading-6 text-[#d0d0d0]">{level}</span>
              <span className="h-[3px] w-0.5 bg-[#b0b0b0]" />
              <span className="h-7 w-full border-y-2 border-r-2 border-[#2f2f2f] bg-[#3b3b3b]" />
            </div>
          ))}
        </div>
        <span className="mt-9 mr-5 ml-[3px] h-7 w-5 bg-[#2c7b38]" />
      </div>
    </div>
  </footer>
);

export default function App() {
  return (
    <div className="flex h-screen flex-col overflow-hidden bg-[#303030] font-['Inter',sans-serif]">
      <MenuBar />
      <Toolbar />
      <div className="flex min-h-0 flex-1">
        <aside className="flex w-[528px] flex-col overflow-hidden pt-1.5">
          {TRACKS.map((track, i) => (
            <TrackControls key={i} {...track} />
          ))}
        </aside>
        <HideControls />
        <Timeline />
      </div>
      <div className="flex h-[102px]">
        <ModeButtons />
        <Ruler />
      </div>
      <Footer />
    </div>
  );
}
